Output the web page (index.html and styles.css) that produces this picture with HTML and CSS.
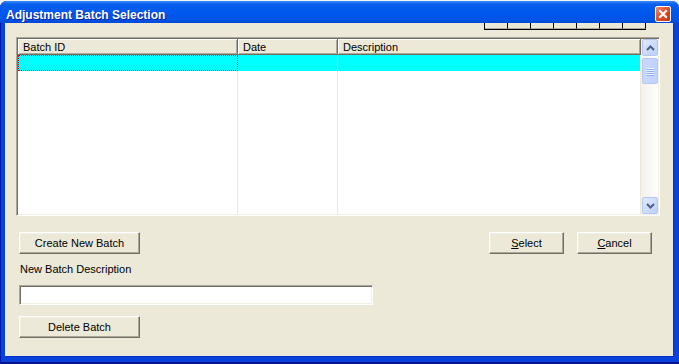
FILE: index.html
```html
<!DOCTYPE html>
<html lang="en">

<head>
    <meta charset="UTF-8">
    <title>Adjustment Batch Selection</title>
    <link rel="stylesheet" href="styles.css">
</head>

<body>

    <div class="window">
        <div class="titlebar">
            <span class="title">Adjustment Batch Selection</span>
            <span class="close-btn">
                <svg width="14" height="14" viewBox="0 0 14 14">
                    <path d="M4 4 L10 10 M10 4 L4 10" stroke="#fff" stroke-width="2.2" stroke-linecap="square"/>
                </svg>
            </span>
        </div>

        <div class="client">
            <!-- toolbar hidden under the caption, only its lower edge shows -->
            <div class="strip">
                <span></span><span></span><span></span><span></span><span></span><span></span><span></span>
            </div>

            <div class="grid-view">
                <div class="grid-main">
                    <div class="grid-head">
                        <div class="hcell col-id">Batch ID</div>
                        <div class="hcell col-date">Date</div>
                        <div class="hcell col-desc">Description</div>
                    </div>
                    <div class="grid-body">
                        <div class="cell sel focus"></div>
                        <div class="cell sel"></div>
                        <div class="cell sel"></div>
                        <div class="cell"></div>
                        <div class="cell"></div>
                        <div class="cell"></div>
                    </div>
                </div>
                <div class="vscroll">
                    <div class="sb-btn">
                        <svg width="9" height="6" viewBox="0 0 9 6"><path d="M1 5 L4.5 1.5 L8 5" fill="none" stroke="#4D6185" stroke-width="2"/></svg>
                    </div>
                    <div class="sb-thumb">
                        <i></i><i></i><i></i><i></i>
                    </div>
                    <div class="sb-track"></div>
                    <div class="sb-btn">
                        <svg width="9" height="6" viewBox="0 0 9 6"><path d="M1 1 L4.5 4.5 L8 1" fill="none" stroke="#4D6185" stroke-width="2"/></svg>
                    </div>
                </div>
            </div>

            <div class="button-row">
                <button class="btn btn-wide">Create New Batch</button>
                <div class="right-buttons">
                    <button class="btn"><u>S</u>elect</button>
                    <button class="btn"><u>C</u>ancel</button>
                </div>
            </div>

            <label class="field-label" for="newDesc">New Batch Description</label>
            <input type="text" id="newDesc" class="text-input">

            <button class="btn btn-wide delete-btn">Delete Batch</button>
        </div>
    </div>

</body>

</html>
```

FILE: styles.css
```css
body {
    margin: 0;
    padding-top: 1px;
    background-color: #f2f2f2;
    font-family: "Liberation Sans", Arial, sans-serif;
    font-size: 11px;
    color: #000;
    overflow: hidden;
}

.window {
    width: 679px;
    padding-bottom: 8px;
    background-color: #0842DB;
    border-radius: 7px 7px 0 0;
    box-shadow: inset 1px 0 #0019A8, inset 0 -2px #00138C;
}

.titlebar {
    height: 22px;
    display: flex;
    align-items: center;
    justify-content: space-between;
    padding: 0 8px 0 6px;
    border-radius: 7px 7px 0 0;
    background: linear-gradient(#3B8CFF 0, #0A5FEA 3px, #0058EE 50%, #0054E6 85%, #0046D4 100%);
}

.title {
    color: #fff;
    font-weight: bold;
    font-size: 12px;
    padding-top: 5px;
    text-shadow: 1px 1px #0A1E9C;
}

.close-btn {
    width: 14px;
    height: 14px;
    margin-top: 4px;
    border: 1px solid #fff;
    border-radius: 2px;
    background: linear-gradient(135deg, #F08A6C 0%, #E2502C 45%, #C83510 100%);
    display: flex;
}

.client {
    height: 333px;
    margin: 0 6px 0 5px;
    background-color: #ECE9D8;
    display: flex;
    flex-direction: column;
    box-shadow: 1px 1px #0631C8;
}

.strip {
    display: flex;
    align-self: flex-end;
    margin-right: 27px;
    height: 6px;
    border-bottom: 1px solid #000;
    border-left: 1px solid #000;
}

.strip span {
    width: 22px;
    background-color: #ECE9D8;
    border-right: 1px solid #000;
    border-bottom: 1px solid #ACA899;
}

.grid-view {
    margin: 7px 0 0 11px;
    width: 640px;
    height: 175px;
    display: flex;
    border: 1px solid;
    border-color: #ACA899 #fff #fff #ACA899;
    box-shadow: inset 1px 1px #716F64, inset -1px -1px #F1EFE2;
    padding: 1px;
}

.grid-main {
    flex: 1;
    display: flex;
    flex-direction: column;
    background-color: #fff;
}

.grid-head {
    display: flex;
    height: 16px;
}

.hcell {
    height: 16px;
    box-sizing: border-box;
    padding: 2px 0 0 5px;
    line-height: 13px;
    background-color: #ECE9D8;
    border-right: 1px solid #716F64;
    border-bottom: 1px solid #716F64;
    box-shadow: inset 1px 1px #fff, inset -1px -1px #ACA899;
}

.col-id { width: 220px; }
.col-date { width: 100px; }
.col-desc { flex: 1; }

.grid-body {
    flex: 1;
    display: grid;
    grid-template-columns: 220px 100px 1fr;
    grid-template-rows: 16px 1fr;
}

.cell {
    border-right: 1px solid #ECE9D8;
}

.cell.sel {
    background-color: #00FFFF;
}

.cell.focus {
    outline: 1px dotted #E00000;
    outline-offset: -1px;
}

.vscroll {
    width: 17px;
    display: flex;
    flex-direction: column;
    background: linear-gradient(90deg, #F3F1EC, #FEFEFB);
}

.sb-btn {
    height: 15px;
    margin: 0 0 1px 1px;
    border: 1px solid #B5C8F4;
    border-radius: 2px;
    background: linear-gradient(135deg, #E1EAFE, #BCCFFA);
    display: flex;
    align-items: center;
    justify-content: center;
}

.sb-btn:last-child {
    margin: 1px 0 0 1px;
}

.sb-thumb {
    height: 24px;
    margin: 1px 0 0 1px;
    border: 1px solid #B5C8F4;
    border-radius: 2px;
    background: linear-gradient(90deg, #CAD8FC, #C0D2FB);
    display: flex;
    flex-direction: column;
    align-items: center;
    justify-content: center;
    gap: 1px;
}

.sb-thumb i {
    display: block;
    width: 7px;
    height: 1px;
    background-color: #EEF4FE;
    box-shadow: 0 1px #8CB0F8;
}

.sb-track {
    flex: 1;
}

.button-row {
    display: flex;
    justify-content: space-between;
    margin: 16px 21px 0 14px;
}

.right-buttons {
    display: flex;
    gap: 13px;
}

.btn {
    width: 75px;
    height: 22px;
    padding: 0;
    font-family: "Liberation Sans", Arial, sans-serif;
    font-size: 11px;
    color: #000;
    background-color: #ECE9D8;
    border: 1px solid;
    border-color: #fff #716F64 #716F64 #fff;
    box-shadow: inset -1px -1px #ACA899, inset 1px 1px #F1EFE2;
}

.btn-wide {
    width: 121px;
}

.field-label {
    margin: 9px 0 0 15px;
    line-height: 13px;
}

.text-input {
    width: 354px;
    height: 20px;
    box-sizing: border-box;
    margin: 9px 0 0 14px;
    border: 1px solid;
    border-color: #ACA899 #fff #fff #ACA899;
    box-shadow: inset 1px 1px #716F64, inset -1px -1px #F1EFE2;
    background-color: #fff;
    padding: 0 3px;
    font-family: "Liberation Sans", Arial, sans-serif;
    font-size: 11px;
}

.delete-btn {
    margin: 11px 0 0 14px;
}
```
